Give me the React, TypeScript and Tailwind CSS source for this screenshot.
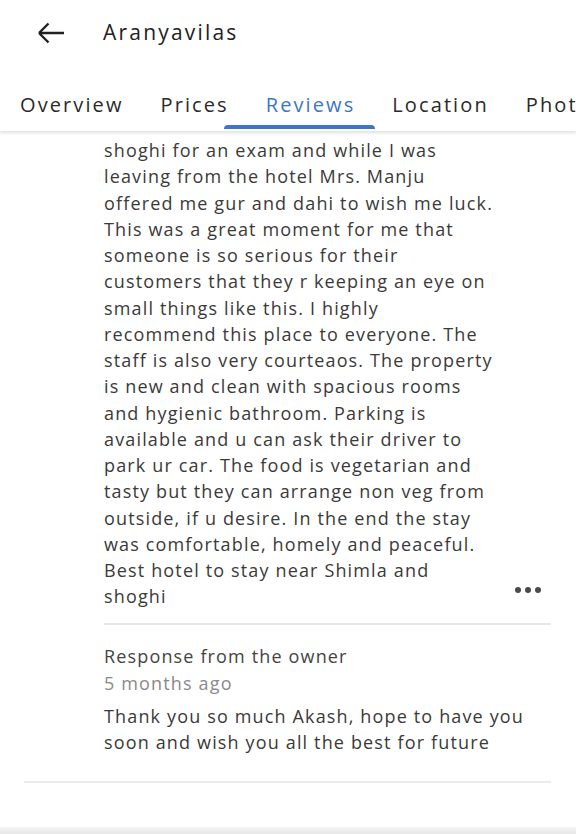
import React from "react";

const reviewLines = [
  "shoghi for an exam and while I was",
  "leaving from the hotel Mrs. Manju",
  "offered me gur and dahi to wish me luck.",
  "This was a great moment for me that",
  "someone is so serious for their",
  "customers that they r keeping an eye on",
  "small things like this. I highly",
  "recommend this place to everyone. The",
  "staff is also very courteaos. The property",
  "is new and clean with spacious rooms",
  "and hygienic bathroom. Parking is",
  "available and u can ask their driver to",
  "park ur car. The food is vegetarian and",
  "tasty but they can arrange non veg from",
  "outside, if u desire. In the end the stay",
  "was comfortable, homely and peaceful.",
  "Best hotel to stay near Shimla and",
  "shoghi",
];

export default function App() {
  const font = { fontFamily: '"Open Sans", Roboto, "Liberation Sans", sans-serif' };
  return (
    <div className="w-[576px] h-[834px] bg-white overflow-hidden flex flex-col relative" style={font}>
      <div className="relative z-10 bg-white shadow-[0_2px_3px_rgba(0,0,0,0.12)]">
        <div className="h-[66px] flex items-center pl-[37px]">
          <svg width="28" height="22" viewBox="0 0 28 22" className="text-[#222]">
            <path d="M2 11H27M2 11L11.5 1.5M2 11L11.5 20.5" stroke="currentColor" strokeWidth="2.4" fill="none" />
          </svg>
          <span className="ml-[38px] text-[21px] text-[#202124] tracking-[2.2px]">Aranyavilas</span>
        </div>
        <div className="h-[65px] flex items-center gap-[37px] pl-[20px] pt-[12px] text-[20px] tracking-[2.1px] text-[#2a2a2a] whitespace-nowrap overflow-hidden">
          <div>Overview</div>
          <div>Prices</div>
          <div className="relative text-[#3b78c4]">
            Reviews
            <div className="absolute left-[-42px] right-[-20px] top-[35px] h-[4px] bg-[#3b78c4] rounded-t-[4px]" />
          </div>
          <div>Location</div>
          <div>Photos</div>
        </div>
      </div>
      <div className="flex-1 flex flex-col">
        <div className="pl-[104px] pr-[25px] pt-[6px] relative">
          <div className="text-[18px] leading-[26.25px] tracking-[1.15px] text-[#3a3a3a]">
            {reviewLines.map((l, i) => (
              <div key={i} className="whitespace-nowrap">{l}</div>
            ))}
          </div>
          <div className="absolute right-[35px] top-[456px] flex gap-[4px]">
            <span className="w-[6px] h-[6px] rounded-full bg-[#4a4a4a]" />
            <span className="w-[6px] h-[6px] rounded-full bg-[#4a4a4a]" />
            <span className="w-[6px] h-[6px] rounded-full bg-[#4a4a4a]" />
          </div>
        </div>
        <div className="ml-[104px] mr-[25px] mt-[13px] h-[2px] bg-[#e6e6e6]" />
        <div className="pl-[104px] pt-[18px] text-[18px] leading-[26.25px] tracking-[1.15px]">
          <div className="text-[#444]">Response from the owner</div>
          <div className="mt-[1px] text-[#8a8a8a]">5 months ago</div>
          <div className="mt-[7px] text-[#3a3a3a]">Thank you so much Akash, hope to have you</div>
          <div className="text-[#3a3a3a]">soon and wish you all the best for future</div>
        </div>
        <div className="ml-[24px] mr-[25px] mt-[25px] h-[2px] bg-[#ebebeb]" />
        <div className="flex-1" />
        <div className="h-[7px] bg-gradient-to-b from-[#f4f4f4] to-[#e8e8e8]" />
      </div>
    </div>
  );
}
